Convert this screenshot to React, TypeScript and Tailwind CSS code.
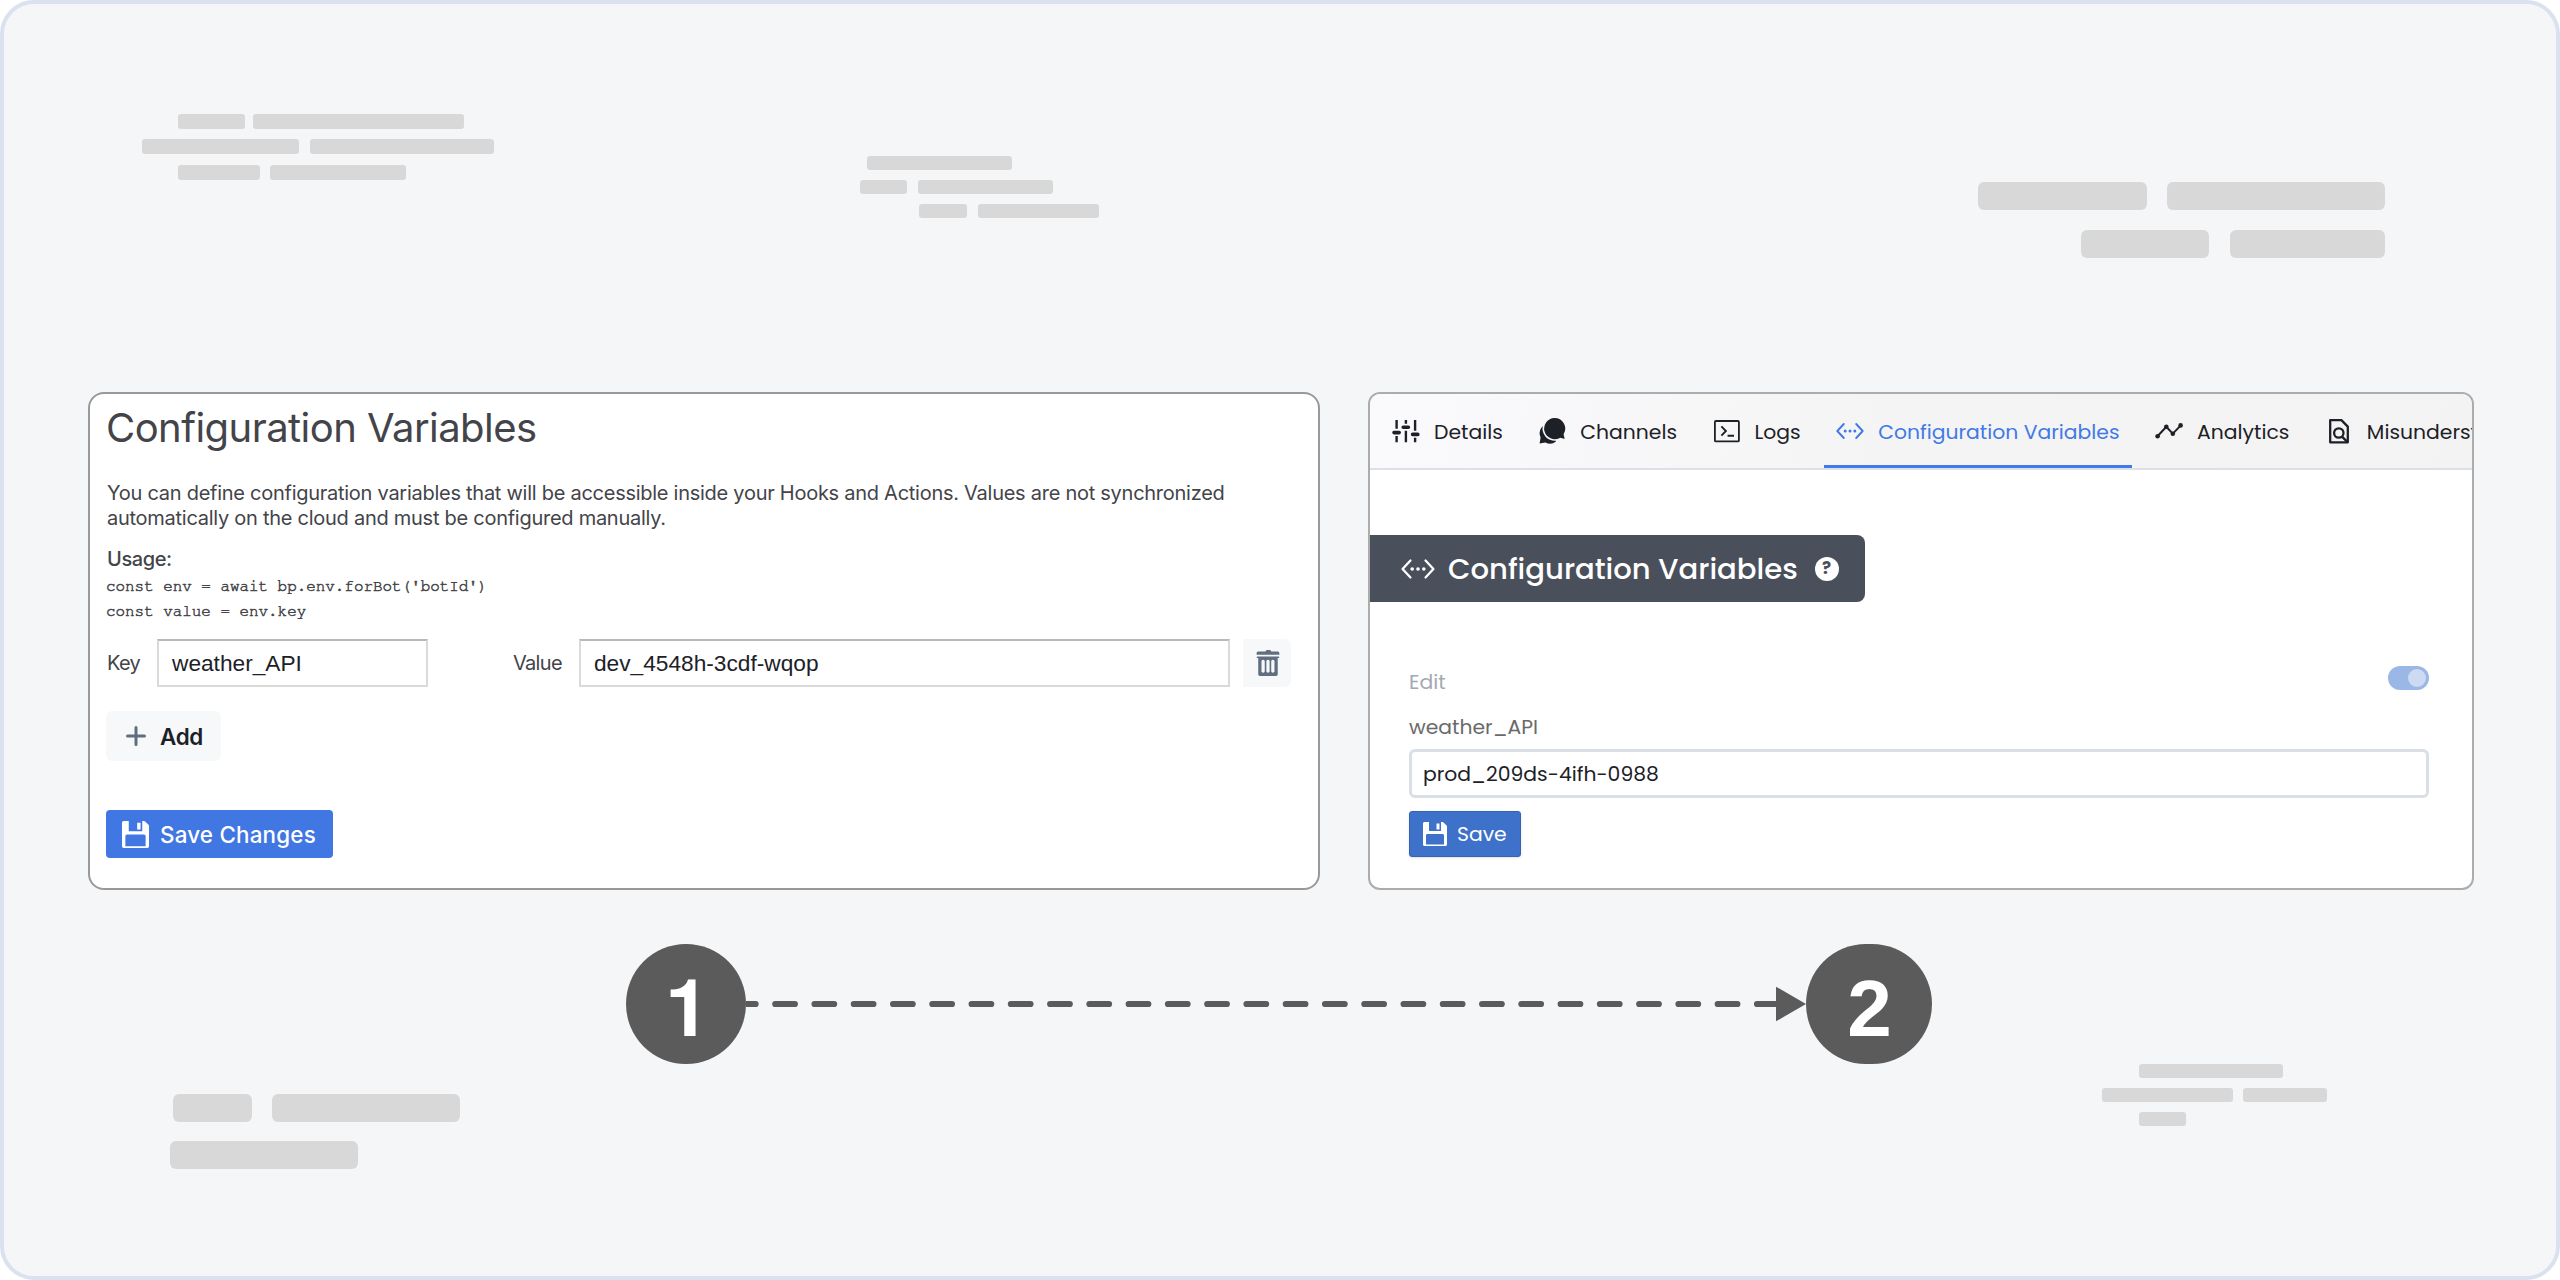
import type { ReactNode } from "react";

function Bars({ rows, className }: { rows: string[][]; className: string }) {
  return (
    <div className={"flex flex-col " + className}>
      {rows.map(([row, ...bars], i) => (
        <div key={i} className={"flex " + row}>
          {bars.map((bar, j) => (
            <div key={j} className={"h-full bg-[#d8d8d8] " + bar} />
          ))}
        </div>
      ))}
    </div>
  );
}

function FloppyIcon({ className }: { className: string }) {
  return (
    <svg viewBox="0 0 16 16" fill="currentColor" fillRule="evenodd" className={className}>
      <path d="M15.71 2.29l-2-2A.997.997 0 0013 0h-1v6H4V0H1C.45 0 0 .45 0 1v14c0 .55.45 1 1 1h14c.55 0 1-.45 1-1V3c0-.28-.11-.53-.29-.71zM14 15H2V9c0-.55.45-1 1-1h10c.55 0 1 .45 1 1v6zM11 1H9v4h2V1z" />
    </svg>
  );
}

function TrashIcon() {
  return (
    <svg viewBox="0 0 16 16" fill="currentColor" className="size-[26px] text-[#5f6f80]">
      <path d="M14.49 3.99h-13c-.28 0-.5.22-.5.5s.22.5.5.5h.5v10c0 .55.45 1 1 1h10c.55 0 1-.45 1-1v-10h.5c.28 0 .5-.22.5-.5s-.22-.5-.5-.5zm-8.5 9c0 .55-.45 1-1 1s-1-.45-1-1v-6c0-.55.45-1 1-1s1 .45 1 1v6zm3 0c0 .55-.45 1-1 1s-1-.45-1-1v-6c0-.55.45-1 1-1s1 .45 1 1v6zm3 0c0 .55-.45 1-1 1s-1-.45-1-1v-6c0-.55.45-1 1-1s1 .45 1 1v6zm2-12h-4c0-.55-.45-1-1-1h-2c0 .55-.45 1-1 1h-4c-.55 0-1 .45-1 1v1h14v-1c0-.55-.45-1-1-1z" />
    </svg>
  );
}

function CodeIcon({ className }: { className: string }) {
  return (
    <svg viewBox="0 0 28 28" fill="none" stroke="currentColor" strokeWidth="1.9" strokeLinecap="round" strokeLinejoin="round" className={className}>
      <path d="M7.8 7L1.3 14L7.8 21M20.2 7L26.7 14L20.2 21" />
      <g fill="currentColor" stroke="none">
        <circle cx="9.2" cy="14" r="1.5" />
        <circle cx="14" cy="14" r="1.5" />
        <circle cx="18.8" cy="14" r="1.5" />
      </g>
    </svg>
  );
}

function SlidersIcon() {
  return (
    <svg viewBox="0 0 28 28" fill="none" stroke="currentColor" className="size-7">
      <path strokeWidth="2.4" d="M4.6 3V11.8M4.6 19V25.2M13.9 3V6.8M13.9 13.8V25.2M23.1 3V13.8M23.1 20.8V25.2" />
      <path strokeWidth="3.6" strokeLinecap="round" d="M2 15.6H7.2M11.2 10.3H16.4M20.6 17.4H25.8" />
    </svg>
  );
}

function ChatIcon() {
  return (
    <svg viewBox="0 0 28 28" fill="currentColor" className="size-7">
      <path d="M11.5 6.5A9.8 9.8 0 0 0 2.6 20.6L1.6 26.4L7.4 25.4A9.8 9.8 0 0 0 18 24.4Z" />
      <path
        stroke="#f7f7f9"
        strokeWidth="1.6"
        d="M16.4 .2A11.4 11.4 0 1 0 22.2 21.6L27.8 23L26.4 17.4A11.4 11.4 0 0 0 16.4 .2Z"
      />
    </svg>
  );
}

function ConsoleIcon() {
  return (
    <svg viewBox="0 0 28 28" fill="none" stroke="currentColor" className="size-7">
      <rect x="1.9" y="4" width="24" height="20.4" rx="1" strokeWidth="1.8" />
      <path strokeWidth="1.9" d="M8.4 9.4L12.9 14L8.4 18.6M14.6 18.8H21" />
    </svg>
  );
}

function TimelineIcon() {
  return (
    <svg viewBox="0 0 28 28" fill="none" stroke="currentColor" strokeWidth="2" className="size-7">
      <path d="M2.5 19.2L11.3 9.8L17.8 16.6L25.6 8.6" />
      <g fill="currentColor" stroke="none">
        <circle cx="2.6" cy="19.2" r="2.3" />
        <circle cx="11.3" cy="9.8" r="2.3" />
        <circle cx="17.8" cy="16.8" r="2.3" />
        <circle cx="25.6" cy="8.4" r="2.3" />
      </g>
    </svg>
  );
}

function FindIcon() {
  return (
    <svg viewBox="0 0 28 28" fill="none" stroke="currentColor" strokeWidth="2.3" strokeLinejoin="round" className="size-7">
      <path d="M5.2 3.1H16.4L22.8 9.6V25.3H5.2Z" />
      <circle cx="13.8" cy="16" r="4.7" />
      <path d="M17 19.6L22 24.6" />
    </svg>
  );
}

function Tab({ icon, label, active }: { icon: ReactNode; label: string; active?: boolean }) {
  return (
    <div
      className={
        "flex shrink-0 items-center gap-3.5 border-b-[3px] px-3 pt-0.5 " +
        (active ? "border-[#4179e6] text-[#4179e6]" : "border-transparent text-[#1d2127]")
      }
    >
      {icon}
      <span className="pt-1 whitespace-nowrap">{label}</span>
    </div>
  );
}

const field =
  "flex h-12 items-center border-2 border-[#dadada] border-t-[#b8b8b8] bg-white pl-[13px] font-['Liberation_Sans',sans-serif] text-[22.7px] tracking-normal text-[#1c2127]";

function LocalCard() {
  return (
    <div className="h-[498px] w-[1232px] rounded-2xl border-2 border-[#999] bg-white pt-2.5 pr-4 pl-[17px] font-[Inter,sans-serif] text-[#434449]">
      <h1 className="-ml-px text-[40px] leading-[48px] tracking-[-0.55px]">Configuration Variables</h1>
      <p className="mt-[29px] text-[20px] leading-[25px] tracking-[-0.265px]">
        You can define configuration variables that will be accessible inside your Hooks and Actions. Values are not synchronized
        <br />
        automatically on the cloud and must be configured manually.
      </p>
      <div className="mt-[15px] text-[20px] leading-[26px] font-medium tracking-[-0.4px]">Usage:</div>
      <pre className="mt-0.5 -ml-px font-[FreeMono,'Liberation_Mono',monospace] text-[15.9px] leading-[25px] [-webkit-text-stroke:0.5px_#434449]">
        {"const env = await bp.env.forBot('botId')\nconst value = env.key"}
      </pre>
      <div className="mt-[15px] flex items-center text-[20px] tracking-[-0.7px]">
        <span className="w-[50px]">Key</span>
        <div className={field + " w-[271px]"}>weather_API</div>
        <span className="ml-[85px] w-[66px]">Value</span>
        <div className={field + " w-[651px]"}>dev_4548h-3cdf-wqop</div>
        <button className="ml-[13px] flex size-12 items-center justify-center rounded-r-md bg-[#f6f8fa] pl-0.5">
          <TrashIcon />
        </button>
      </div>
      <button className="-ml-px mt-6 flex h-[50px] w-[115px] items-center rounded-md bg-[#f6f8fa] pt-0.5 pl-5 text-[22.4px] font-semibold tracking-[-0.3px] text-[#1c2127]">
        <svg viewBox="0 0 20 20" fill="none" stroke="#5f6f80" strokeWidth="3" strokeLinecap="round" className="mr-[14px] mb-0.5 size-5">
          <path d="M10 1.5V18.5M1.5 10H18.5" />
        </svg>
        Add
      </button>
      <button className="-ml-px mt-[49px] flex h-12 w-[227px] items-center rounded bg-[#4177e2] pt-px pl-4 text-[22.4px] font-medium tracking-[0.2px] text-white">
        <FloppyIcon className="mr-[11px] size-[27px]" />
        Save Changes
      </button>
    </div>
  );
}

function CloudCard() {
  return (
    <div className="h-[498px] w-[1106px] overflow-hidden rounded-xl border-2 border-[#acacac] bg-white font-[Poppins,Inter,sans-serif] text-[20.35px]">
      <nav className="flex h-[76px] gap-[11.5px] border-b-2 border-[#dbe1e7] bg-[linear-gradient(100deg,#fafafd_0%,#f4f4f4_50%,#f3f3f3_100%)] pl-2.5">
        <Tab icon={<SlidersIcon />} label="Details" />
        <Tab icon={<ChatIcon />} label="Channels" />
        <Tab icon={<ConsoleIcon />} label="Logs" />
        <Tab icon={<CodeIcon className="size-7" />} label="Configuration Variables" active />
        <Tab icon={<TimelineIcon />} label="Analytics" />
        <Tab icon={<FindIcon />} label="Misunderstood" />
      </nav>
      <div className="mt-[65px] flex h-[67px] w-[495px] items-center rounded-r-lg bg-[#49505b] pl-[31px] text-[29.1px] font-medium text-white">
        <CodeIcon className="size-[34px]" />
        <span className="ml-[13px] whitespace-nowrap">Configuration Variables</span>
        <span className="ml-[17px] flex size-6 items-center justify-center rounded-full bg-white pt-px text-[17px] font-bold text-[#49505b]">?</span>
      </div>
      <div className="mt-16 mr-[43px] ml-[39px]">
        <div className="flex h-8 items-start justify-between">
          <span className="leading-8 text-[#a3a9b3]">Edit</span>
          <span className="flex h-6 w-[41px] items-center justify-end rounded-full bg-[#9bb7e5] pr-[3px]">
            <span className="size-[18px] rounded-full bg-[#cddbf2]" />
          </span>
        </div>
        <div className="mt-3.5 leading-[30px] text-[#6a6a6a]">weather_API</div>
        <div className="mt-[7px] flex h-[49px] items-center rounded-md border-3 border-[#d9dfe4] pt-px pl-[11px] text-[#1c2127]">
          prod_209ds-4ifh-0988
        </div>
        <button className="mt-[13px] flex h-[46px] w-[112px] items-center rounded-[3px] border border-[#3462b4] bg-[#3d71ca] pl-[13px] text-white shadow-sm">
          <FloppyIcon className="mr-2.5 size-6" />
          Save
        </button>
      </div>
    </div>
  );
}

const step = "flex h-[120px] items-center justify-center rounded-[60px] bg-[#5b5b5b] text-[80px] leading-none font-bold text-white";

export default function App() {
  return (
    <div className="h-[1280px] w-[2560px] bg-white">
      <div className="flex h-full w-full flex-col rounded-[34px] border-4 border-[#dae2f0] bg-[#f5f6f8]">
        <div className="flex h-[388px] items-start">
          <Bars
            className="mt-[110px] ml-[138px] w-[352px] gap-2.5"
            rows={[
              ["h-[15px] pl-9 gap-2", "w-[67px] rounded-[3px]", "w-[211px] rounded-[3px]"],
              ["h-[15px] gap-[11px]", "w-[157px] rounded-[3px]", "w-[184px] rounded-[3px]"],
              ["mt-px h-[15px] pl-9 gap-2.5", "w-[82px] rounded-[3px]", "w-[136px] rounded-[3px]"],
            ]}
          />
          <Bars
            className="mt-[152px] ml-[366px] w-[240px] gap-[9.5px]"
            rows={[
              ["h-3.5 pl-[7px]", "w-[145px] rounded-[3px]"],
              ["h-3.5 gap-[11px]", "w-[47px] rounded-[3px]", "w-[135px] rounded-[3px]"],
              ["mt-px h-3.5 pl-[59px] gap-[11px]", "w-[48px] rounded-[3px]", "w-[121px] rounded-[3px]"],
            ]}
          />
          <Bars
            className="mt-[178px] ml-[878px] w-[407px] gap-5"
            rows={[
              ["h-7 gap-5", "w-[169px] rounded-md", "w-[218px] rounded-md"],
              ["h-7 pl-[103px] gap-[21px]", "w-[128px] rounded-md", "w-[155px] rounded-md"],
            ]}
          />
        </div>
        <div className="ml-[84px] flex gap-12">
          <LocalCard />
          <CloudCard />
        </div>
        <div className="mt-[54px] ml-[622px] flex">
          <div className={step + " w-[120px] pt-4 pl-[3px] font-[FreeSans,Inter,sans-serif]"}>1</div>
          <svg viewBox="0 0 1060 120" className="h-[120px] w-[1060px]">
            <path d="M-10 60H1030" stroke="#5b5b5b" strokeWidth="6.2" strokeLinecap="round" strokeDasharray="19.6 19.67" />
            <path d="M1030 42.7L1060 60L1030 77.3Z" fill="#5b5b5b" />
          </svg>
          <div className={step + " w-[126px] pt-2.5 pl-px font-['Liberation_Sans',sans-serif]"}>2</div>
        </div>
        <div className="flex items-start">
          <Bars
            className="mt-[30px] ml-[166px] w-[290px] gap-[19px]"
            rows={[
              ["h-7 pl-[3px] gap-5", "w-[79px] rounded-md", "w-[188px] rounded-md"],
              ["h-7", "w-[188px] rounded-md"],
            ]}
          />
          <Bars
            className="ml-auto mr-[229px] w-[225px] gap-[9.5px]"
            rows={[
              ["h-3.5 pl-[37px]", "w-[144px] rounded-[3px]"],
              ["h-3.5 gap-2.5", "w-[131px] rounded-[3px]", "w-[84px] rounded-[3px]"],
              ["mt-px h-3.5 pl-[37px]", "w-[47px] rounded-[3px]"],
            ]}
          />
        </div>
      </div>
    </div>
  );
}
